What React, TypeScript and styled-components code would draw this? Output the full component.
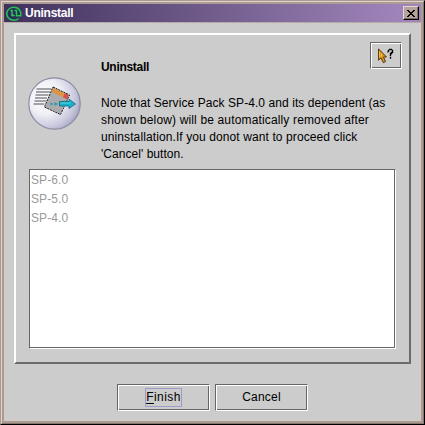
import React from 'react';
import styled, { createGlobalStyle } from 'styled-components';

const GlobalStyle = createGlobalStyle`
  * { box-sizing: border-box; }
  html, body { margin: 0; padding: 0; overflow: hidden; background: #000; }
`;

const WindowEdge = styled.div`
  width: 425px;
  height: 425px;
  border: 1px solid #a99a93;
  border-right-color: #000;
  border-bottom-color: #000;
  font-family: 'Liberation Sans', Arial, sans-serif;
  font-size: 12px;
  color: #000;
`;

const WindowBevel = styled.div`
  height: 100%;
  border: 1px solid #e2d3ca;
  border-right-color: #85766f;
  border-bottom-color: #85766f;
`;

const WindowFrame = styled.div`
  height: 100%;
  display: flex;
  flex-direction: column;
  border: 2px solid #ab9b93;
`;

const TitleBar = styled.header`
  height: 18px;
  flex: none;
  display: flex;
  align-items: center;
  padding: 0 2px;
  background: linear-gradient(90deg, #3f315c 0%, #9e83b8 94%, #a185bb 100%);
`;

const Title = styled.h1`
  flex: 1;
  margin: 0 0 0 3px;
  font-size: 12px;
  line-height: 18px;
  font-weight: bold;
  letter-spacing: -0.25px;
  color: #fff;
`;

const CloseButton = styled.button`
  width: 16px;
  height: 14px;
  padding: 0;
  display: flex;
  align-items: center;
  justify-content: center;
  background: #b3a39b;
  border: 1px solid;
  border-color: #e6d9d1 #000 #000 #e6d9d1;
  box-shadow: inset -1px -1px #7d6f68;
`;

const Content = styled.main`
  flex: 1;
  display: flex;
  flex-direction: column;
  padding: 10px 8px 0 9px;
  background: #ccc;
  border: 1px solid #d4cbc6;
  border-top-color: #b5aaa6;
`;

const Panel = styled.section`
  width: 397px;
  height: 331px;
  flex: none;
  display: flex;
  flex-direction: column;
  border: 2px solid;
  border-color: #fff #6b6b6b #6b6b6b #fff;
  padding: 7px 13px 0 13px;
`;

const Intro = styled.div`
  height: 127px;
  flex: none;
  display: grid;
  grid-template-columns: 72px 1fr;
`;

const Badge = styled.div`
  margin: 34px 0 0 -2px;
`;

const Heading = styled.h2`
  margin: 0;
  padding-top: 17px;
  font-size: 12px;
  line-height: 16px;
  letter-spacing: -0.3px;
`;

const Message = styled.div`
  margin-top: 19.5px;
  white-space: nowrap;
`;

const HeadRow = styled.div`
  height: 33px;
  display: flex;
  justify-content: space-between;
`;

const Line = styled.div<{ $spacing: number }>`
  height: 17px;
  line-height: 17px;
  letter-spacing: ${(p) => p.$spacing}px;
`;

const EtchedButton = styled.button<{ $width: number; $height: number }>`
  width: ${(p) => p.$width}px;
  height: ${(p) => p.$height}px;
  flex: none;
  padding: 0;
  display: flex;
  align-items: center;
  justify-content: center;
  font: inherit;
  color: #000;
  background: #ccc;
  border: 1px solid;
  border-color: #666 #fff #fff #666;
  box-shadow: inset 1px 1px #fff, inset -1px -1px #666;
`;

const HelpSlot = styled.div`
  margin-right: -6px;
`;

const List = styled.ul`
  width: 367px;
  height: 180px;
  margin: 0;
  padding: 1px;
  list-style: none;
  color: #999;
  background: #fff;
  border: 1px solid;
  border-color: #666 #fff #fff #666;
  box-shadow: inset -1px -1px #666;
`;

const ListItem = styled.li`
  height: 19px;
  line-height: 19px;
  letter-spacing: 0.1px;
`;

const Actions = styled.footer`
  display: flex;
  gap: 5px;
  padding: 20px 0 0 103px;
`;

const Label = styled.span<{ $focused?: boolean }>`
  height: 19px;
  line-height: 17px;
  border: 1px solid ${(p) => (p.$focused ? '#9c9cc8' : 'transparent')};
  letter-spacing: ${(p) => (p.$focused ? 0.45 : 0.2)}px;
`;

const Mnemonic = styled.span`
  text-decoration: underline;
  text-underline-offset: 2px;
`;

const AppLogo = () => (
  <svg width="16" height="16" viewBox="0 0 16 16" fill="none">
    <circle cx="8" cy="8" r="7" fill="#26305a" />
    <path d="M12.500 13.500A7 6.500 0 1 1 14.700 7.500v3.200H10.500V5.500H8.500" stroke="#27c64e" strokeWidth="1.500" />
    <path d="M4.500 5.500h1.500v5h2.500" stroke="#35d45b" strokeWidth="1.300" />
  </svg>
);

const CloseGlyph = () => (
  <svg width="8" height="7" viewBox="0 0 8 7" shapeRendering="crispEdges">
    <path d="M0 0h2v1h1v1h2v-1h1v-1h2v1h-1v1h-1v1h-1v1h1v1h1v1h1v1h-2v-1h-1v-1h-2v1h-1v1h-2v-1h1v-1h1v-1h1v-1h-1v-1h-1v-1h-1z" />
  </svg>
);

const HelpGlyph = () => (
  <svg width="16" height="16" viewBox="0 0 16 16">
    <path d="M.5 .8v11.400L3 10l2.300 4.700 2.300-1.200L5.500 9h3z" fill="#d9941c" stroke="#4b2d08" strokeWidth=".9" />
    <path d="M1.500 3.500v6M3.500 5.500v3" stroke="#f2c94d" />
    <path d="M9 4h1V2h1V1h3v1h1v3h-1v1h-1v2h-1V5h1V4h1V2h-3v2zM12 9h1v1.500h-1z" stroke="#000" strokeWidth=".4" />
  </svg>
);

const UninstallBadge = () => (
  <svg width="54" height="54" viewBox="-0.500 -0.500 54 54">
    <defs>
      <radialGradient id="orb" cx="32%" cy="38%" r="72%">
        <stop offset="0" stopColor="#fff" />
        <stop offset="0.450" stopColor="#f0f0f7" />
        <stop offset="0.800" stopColor="#cacade" />
        <stop offset="1" stopColor="#a7a7c6" />
      </radialGradient>
    </defs>
    <circle cx="27" cy="27" r="25.700" fill="url(#orb)" stroke="#8b8ba3" strokeWidth="1.200" />
    <path d="M9 12.500h15M8.500 15.500h14M8 18.500h13M7.500 21.500h12M7 24.500h12M6 27.500h11" stroke="#4d4d54" />
    <path d="M25.500 10.500 42 18.500 33 38 17 30.500z" fill="#ababaf" />
    <path d="M25.500 10.500 42 18.500l-2.200 4.500L23.500 15z" fill="#df9442" />
    <path d="m37.500 16.300 4.500 2.200-2.200 4.500-4.300-2.300z" fill="#d94f50" />
    <path d="M25.500 10.500 42 18.500 33 38 17 30.500z" fill="none" stroke="#fff" />
    <path d="M25.500 10.500 42 18.500 33 38 17 30.500z" fill="none" stroke="#111" strokeDasharray="2.200 .7" />
    <path d="M32 25h9.500v-2.500l6.500 5-6.500 4.500v-2.500H32z" fill="#17b3cc" stroke="#11657a" strokeWidth=".8" />
    <path d="M33 26.500h10" stroke="#6ad8e4" strokeWidth=".8" />
    <path d="m23 26.500 2.500 1-2.500 1M27 26l3 1.500-3 1.500" fill="#12a5ba" stroke="#198fa3" strokeWidth=".5" />
  </svg>
);

const messageLines = [
  { text: 'Note that Service Pack SP-4.0 and its dependent (as', spacing: 0.07 },
  { text: 'shown below) will be automatically removed after', spacing: 0.15 },
  { text: 'uninstallation.If you donot want to proceed click', spacing: 0.1 },
  { text: "'Cancel' button.", spacing: 0.04 },
];

const servicePacks = ['SP-6.0', 'SP-5.0', 'SP-4.0'];

export default function App() {
  return (
    <>
      <GlobalStyle />
      <WindowEdge>
        <WindowBevel>
          <WindowFrame>
            <TitleBar>
              <AppLogo />
              <Title>Uninstall</Title>
              <CloseButton aria-label="Close"><CloseGlyph /></CloseButton>
            </TitleBar>
            <Content>
              <Panel>
                <Intro>
                  <Badge><UninstallBadge /></Badge>
                  <div>
                    <HeadRow>
                      <Heading>Uninstall</Heading>
                      <HelpSlot>
                        <EtchedButton $width={32} $height={27} aria-label="Help"><HelpGlyph /></EtchedButton>
                      </HelpSlot>
                    </HeadRow>
                    <Message>
                      {messageLines.map((line) => (
                        <Line key={line.text} $spacing={line.spacing}>{line.text}</Line>
                      ))}
                    </Message>
                  </div>
                </Intro>
                <List>
                  {servicePacks.map((name) => <ListItem key={name}>{name}</ListItem>)}
                </List>
              </Panel>
              <Actions>
                <EtchedButton $width={93} $height={27}>
                  <Label $focused><Mnemonic>F</Mnemonic>inish</Label>
                </EtchedButton>
                <EtchedButton $width={93} $height={27}><Label>Cancel</Label></EtchedButton>
              </Actions>
            </Content>
          </WindowFrame>
        </WindowBevel>
      </WindowEdge>
    </>
  );
}
